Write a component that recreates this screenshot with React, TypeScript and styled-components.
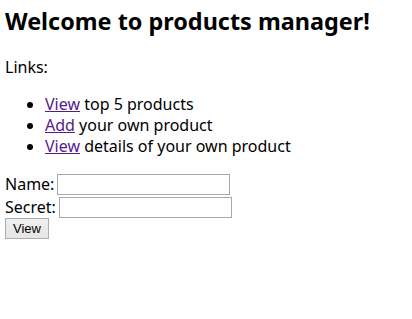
import React from 'react';
import { styled, createGlobalStyle } from 'styled-components';

const GlobalStyle = createGlobalStyle`
  body {
    margin: 0;
    background: #ffffff;
    color: #000000;
    font-family: 'Noto Sans', 'Noto Sans CJK KR', sans-serif;
    font-size: 16px;
  }
`;

const links = [
  { label: 'View', rest: ' top 5 products' },
  { label: 'Add', rest: ' your own product' },
  { label: 'View', rest: ' details of your own product' },
];

export default function App() {
  return (
    <Page>
      <GlobalStyle />
      <Title>Welcome to products manager!</Title>
      <Text>Links:</Text>
      <LinkList>
        {links.map((l, i) => (
          <LinkItem key={i}>
            <Link href="#">{l.label}</Link>
            {l.rest}
          </LinkItem>
        ))}
      </LinkList>
      <Form onSubmit={(e) => e.preventDefault()}>
        <Row $height={23}>
          Name: <Field type="text" />
        </Row>
        <Row $height={21}>
          Secret: <Field type="password" />
        </Row>
        <Button type="submit">View</Button>
      </Form>
    </Page>
  );
}

const Page = styled.div`
  padding: 0 5px;
`;

const Title = styled.h2`
  margin: 5px 0 20px;
  font-size: 23.4px;
  line-height: 32px;
  font-weight: bold;
`;

const Text = styled.p`
  margin: 0 0 16px;
  line-height: 21px;
`;

const LinkList = styled.ul`
  margin: 0 0 16px;
  padding-left: 40px;
  line-height: 21px;
`;

const LinkItem = styled.li``;

const Link = styled.a`
  color: #551a8b;
  text-decoration: underline;
`;

const Form = styled.form`
  margin: 0;
`;

const Row = styled.div<{ $height: number }>`
  display: flex;
  align-items: flex-start;
  gap: 3px;
  height: ${(p) => p.$height}px;
  padding-top: 1px;
  box-sizing: border-box;
  line-height: 21px;
`;

const Field = styled.input`
  box-sizing: border-box;
  width: 173px;
  height: 21px;
  margin: 0;
  padding: 1px 2px;
  border: 1px solid #a9a9a9;
  border-radius: 0;
  font: 13px 'Liberation Sans', sans-serif;
  outline: none;
`;

const Button = styled.button`
  display: block;
  box-sizing: border-box;
  width: 44px;
  height: 21px;
  margin: 1px 0 0;
  padding: 0 6px;
  border: 1px solid #adadad;
  border-radius: 0;
  background: linear-gradient(#f0f0f0, #e5e5e5);
  color: #000000;
  font: 13px 'Liberation Sans', Arial, sans-serif;
  line-height: 19px;
`;
